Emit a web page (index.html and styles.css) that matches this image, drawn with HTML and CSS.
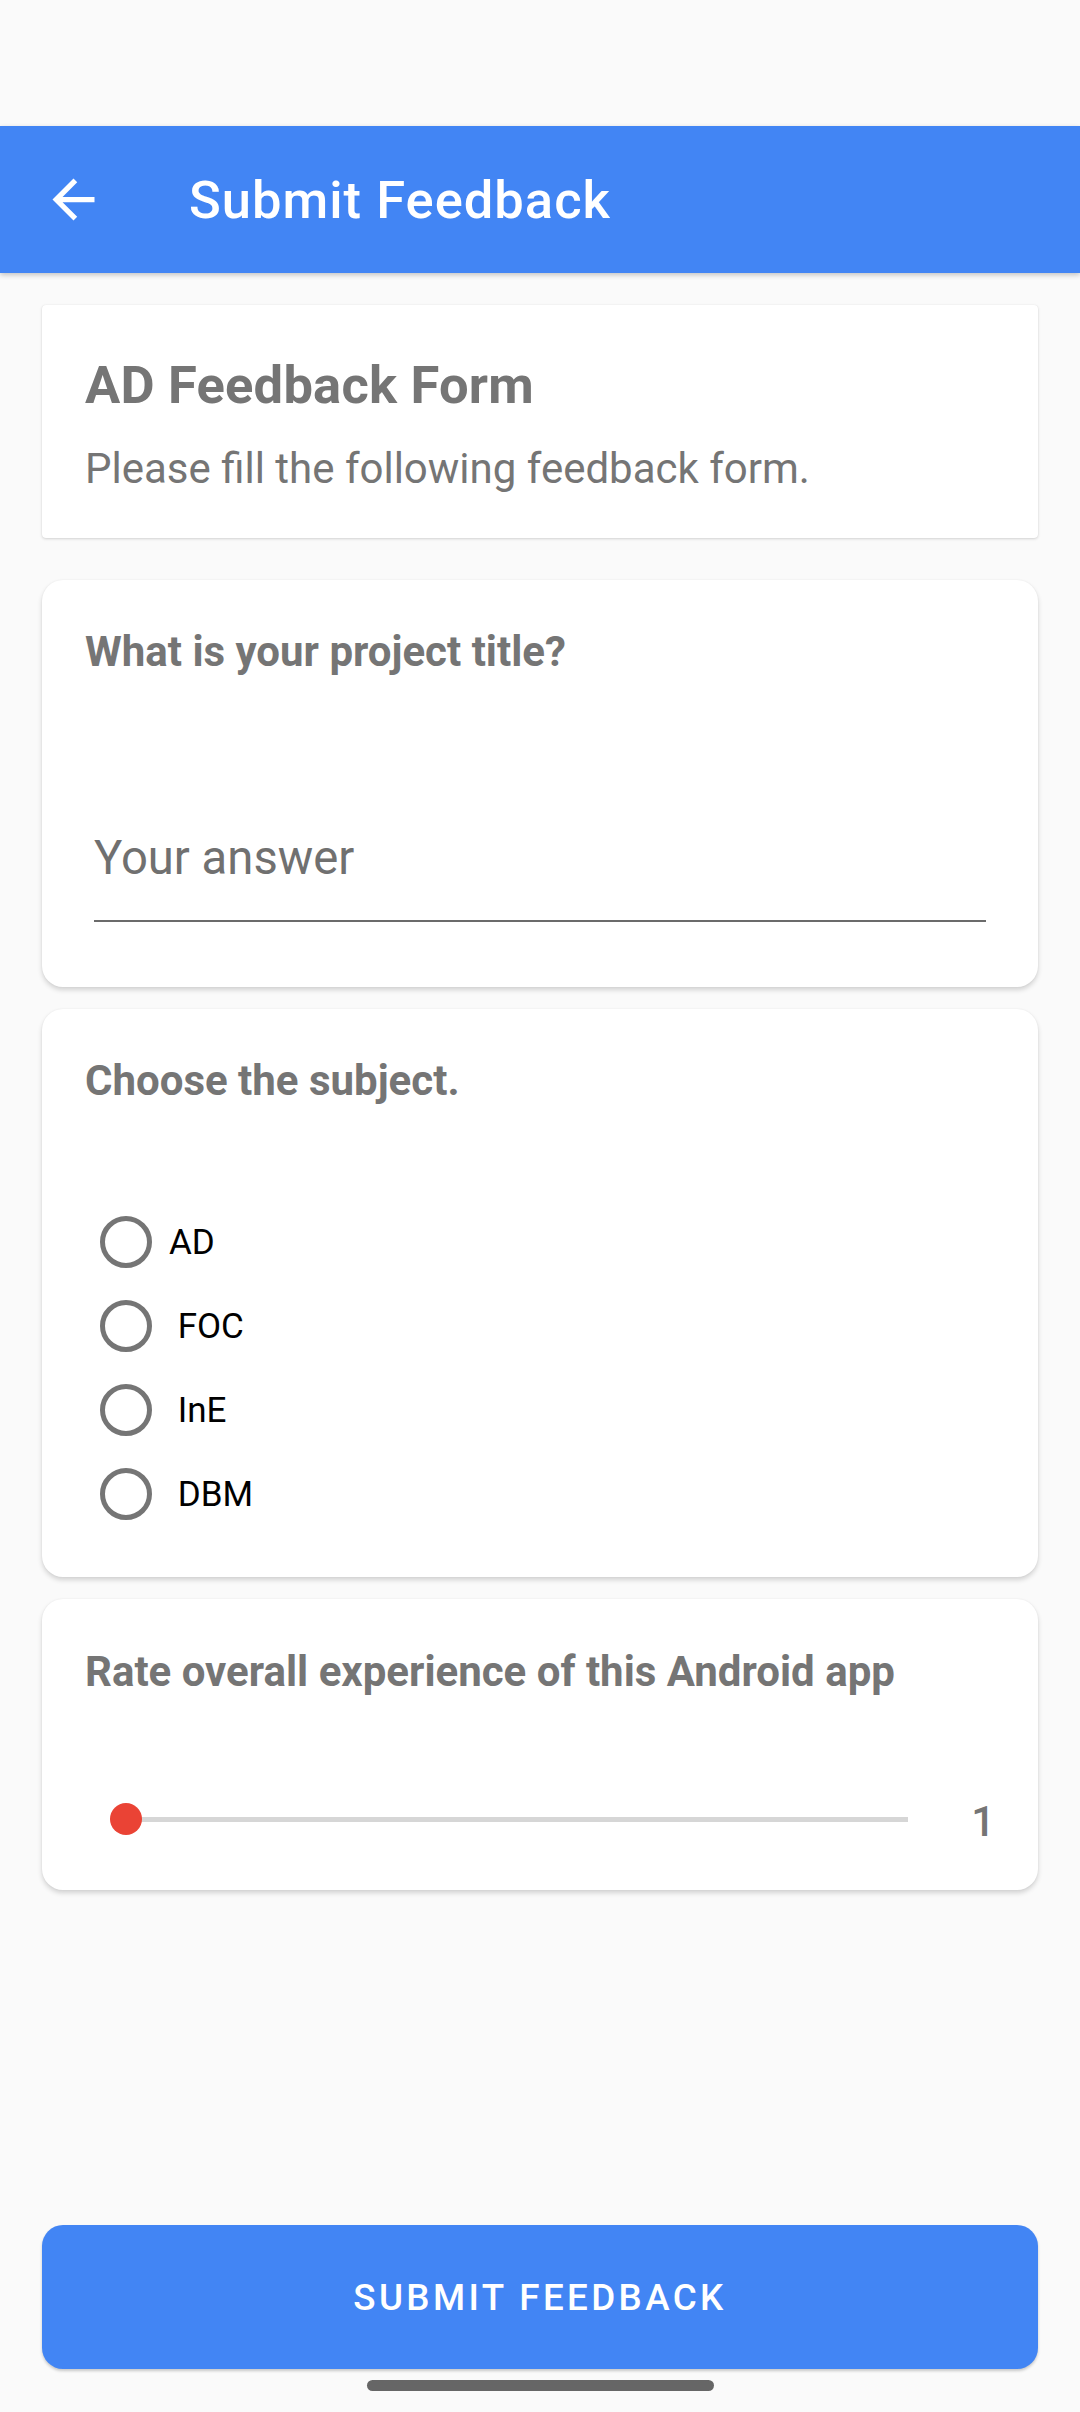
FILE: index.html
```html
<!DOCTYPE html>
<html lang="en">
<head>
<meta charset="utf-8">
<title>Submit Feedback</title>
<link rel="stylesheet" href="styles.css">
</head>
<body>
<div class="screen">
  <div class="status-bar"></div>
  <header class="app-bar">
    <button class="nav-btn" aria-label="Back">
      <svg class="nav-icon" viewBox="0 0 24 24" width="63" height="63"><path fill="#ffffff" d="M20 11H7.83l5.59-5.59L12 4l-8 8 8 8 1.41-1.41L7.83 13H20v-2z"/></svg>
    </button>
    <h1 class="app-title">Submit Feedback</h1>
  </header>

  <main class="content">
    <section class="card card-intro">
      <h2 class="form-title">AD Feedback Form</h2>
      <p class="form-desc">Please fill the following feedback form.</p>
    </section>

    <section class="card card-q card-title-q">
      <h3 class="question">What is your project title?</h3>
      <input class="answer" type="text" placeholder="Your answer">
    </section>

    <section class="card card-q card-subject">
      <h3 class="question">Choose the subject.</h3>
      <div class="radio-group">
        <label class="radio-row"><span class="radio"></span><span class="radio-label">AD</span></label>
        <label class="radio-row"><span class="radio"></span><span class="radio-label"> FOC</span></label>
        <label class="radio-row"><span class="radio"></span><span class="radio-label"> InE</span></label>
        <label class="radio-row"><span class="radio"></span><span class="radio-label"> DBM</span></label>
      </div>
    </section>

    <section class="card card-q card-rate">
      <h3 class="question">Rate overall experience of this Android app</h3>
      <div class="slider-row">
        <div class="slider">
          <div class="track"></div>
          <div class="thumb"></div>
        </div>
        <span class="slider-value">1</span>
      </div>
    </section>
  </main>

  <button class="submit-btn">SUBMIT FEEDBACK</button>
  <div class="nav-handle"></div>
</div>
</body>
</html>
```

FILE: styles.css
```css
* { box-sizing: border-box; }

html, body {
  margin: 0;
  padding: 0;
}

body {
  background: #fafafa;
  font-family: Roboto, "Noto Sans", "Liberation Sans", sans-serif;
}

.screen {
  width: 1080px;
  height: 2412px;
  display: flex;
  flex-direction: column;
  background: #fafafa;
}

.status-bar {
  height: 126px;
  flex: none;
}

.app-bar {
  height: 147px;
  flex: none;
  background: #4285f4;
  display: flex;
  align-items: center;
  box-shadow: 0 2px 5px rgba(0, 0, 0, 0.22);
  position: relative;
  z-index: 2;
}

.nav-btn {
  width: 147px;
  height: 147px;
  border: none;
  background: transparent;
  padding: 0;
  display: flex;
  align-items: center;
  justify-content: center;
}

.nav-icon { display: block; }

.app-title {
  margin: 0 0 0 42px;
  font-size: 52.5px;
  line-height: 62px;
  font-weight: 500;
  letter-spacing: 1px;
  color: #ffffff;
}

.content {
  padding: 0 42px;
  display: flex;
  flex-direction: column;
}

.card {
  background: #ffffff;
  padding: 0 43px;
}

.card-intro {
  margin-top: 32px;
  height: 233px;
  border-radius: 4px;
  padding-top: 49px;
  box-shadow: 0 1px 3px rgba(0, 0, 0, 0.16), 0 0 1px rgba(0, 0, 0, 0.08);
}

.form-title {
  margin: 0;
  font-size: 52.5px;
  line-height: 62px;
  font-weight: 700;
  letter-spacing: 0.2px;
  color: #757575;
}

.form-desc {
  margin: 28px 0 0;
  font-size: 42px;
  line-height: 50px;
  font-weight: 400;
  color: #757575;
}

.card-q {
  border-radius: 21px;
  padding-top: 47px;
  box-shadow: 0 3px 5px rgba(0, 0, 0, 0.16), 0 0 2px rgba(0, 0, 0, 0.06);
}

.card-title-q { margin-top: 42px; height: 407px; }
.card-subject { margin-top: 22px; height: 568px; }
.card-rate { margin-top: 22px; height: 291px; padding-top: 48px; }

.question {
  margin: 0;
  font-size: 42px;
  line-height: 50px;
  font-weight: 700;
  color: #757575;
}

.answer {
  display: block;
  margin: 153px 0 0 9px;
  width: 892px;
  height: 92px;
  padding: 0 0 34px 0;
  border: none;
  border-bottom: 2px solid #6b6b6b;
  background: transparent;
  font-family: Roboto, "Noto Sans", "Liberation Sans", sans-serif;
  font-size: 47.25px;
  line-height: 56px;
  color: #212121;
  outline: none;
}

.answer::placeholder {
  color: #707070;
  opacity: 1;
}

.radio-group {
  margin-top: 94px;
  display: flex;
  flex-direction: column;
}

.radio-row {
  height: 84px;
  display: flex;
  align-items: center;
  padding-left: 15px;
}

.radio {
  width: 52px;
  height: 52px;
  border-radius: 50%;
  border: 5px solid #757575;
  flex: none;
}

.radio-label {
  margin-left: 17px;
  padding-top: 1px;
  font-size: 35px;
  line-height: 40px;
  color: #000000;
  white-space: pre;
}

.slider-row {
  margin-top: 97px;
  height: 50px;
  display: flex;
  align-items: center;
}

.slider {
  position: relative;
  margin-left: 41px;
  width: 783px;
  height: 50px;
  display: flex;
  align-items: center;
}

.track {
  width: 100%;
  height: 5px;
  background: #d6d6d6;
}

.thumb {
  position: absolute;
  left: -16px;
  top: 9px;
  width: 32px;
  height: 32px;
  border-radius: 50%;
  background: #ea4335;
}

.slider-value {
  margin-left: 63px;
  padding-top: 6px;
  font-size: 42px;
  line-height: 50px;
  font-weight: 500;
  color: #757575;
}

.submit-btn {
  margin: auto 42px 0;
  height: 144px;
  flex: none;
  border: none;
  border-radius: 21px;
  background: #4285f4;
  color: #ffffff;
  font-family: Roboto, "Noto Sans", "Liberation Sans", sans-serif;
  font-size: 36.75px;
  font-weight: 500;
  letter-spacing: 3.4px;
  box-shadow: 0 2px 3px rgba(0, 0, 0, 0.2);
}

.nav-handle {
  margin: 11px auto 21px;
  width: 347px;
  height: 11px;
  border-radius: 6px;
  background: #666666;
  flex: none;
}
```
